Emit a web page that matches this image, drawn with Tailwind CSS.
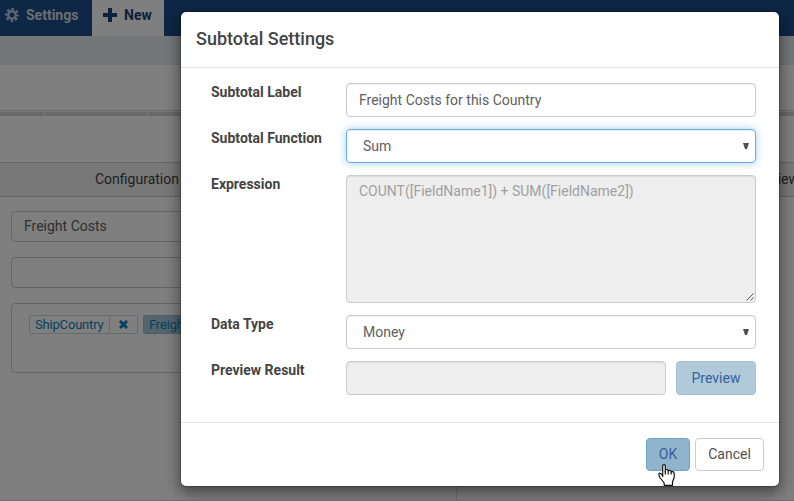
<!DOCTYPE html>
<html lang="en">
<head>
<meta charset="utf-8">
<title>Subtotal Settings</title>
<script src="https://cdn.jsdelivr.net/npm/@tailwindcss/browser@4"></script>
</head>
<body class="relative h-[501px] w-[794px] overflow-hidden bg-white font-['Roboto',sans-serif] text-sm leading-5 text-[#606060]">
<!-- Page behind the dialog -->
<div class="flex h-[501px] flex-col">
  <header class="flex h-9 shrink-0 bg-[#1d4e8c] font-bold">
    <div class="flex w-[92px] items-center pb-[6px] pl-[5px] text-[#d9dcde]">
      <svg class="mr-[7px] h-[14px] w-[14px]" viewBox="0 0 14 14" fill="none" stroke="#b9d0dc"><circle cx="7" cy="7" r="3.7" stroke-width="2.4"/><circle cx="7" cy="7" r="5.9" stroke-width="2.2" stroke-dasharray="2.5 2.134" stroke-dashoffset="1.25"/></svg>
      <span>Settings</span>
    </div>
    <div class="flex w-[72px] items-center bg-white pb-[6px] pl-[11px] text-[#1d4277]">
      <svg class="mr-[7px] h-[14px] w-[14px]" viewBox="0 0 14 14" fill="#1d4277"><path d="M5 0h4v5h5v4H9v5H5V9H0V5h5z"/></svg>
      <span>New</span>
    </div>
  </header>
  <div class="h-[29px] shrink-0 bg-[#e7ebef]"></div>
  <div class="h-[45px] shrink-0"></div>
  <div class="flex h-[6px] shrink-0 gap-px border-t border-[#d4d4d4] bg-[#f4f4f4] pt-px">
    <div class="w-11 bg-[#d2d2d2]"></div><div class="w-[102px] bg-[#d2d2d2]"></div><div class="flex-1 bg-[#d2d2d2]"></div>
  </div>
  <div class="h-[46px] shrink-0"></div>
  <div class="flex h-[35px] shrink-0 items-center justify-between border-y border-[#ccc] bg-[#f0f0f0] pb-px text-[#404040]">
    <span class="pl-[95px]">Configuration</span><span class="-mr-[5px]">Preview</span>
  </div>
  <div class="flex flex-1">
    <div class="flex w-[456px] flex-col border-b border-[#ddd] pl-[11px] pt-[14px]">
      <div class="h-[31px] w-[430px] rounded border border-[#ccc] px-3 py-1">Freight Costs</div>
      <div class="mt-[15px] h-[31px] w-[430px] rounded border border-[#ccc]"></div>
      <div class="mt-[15px] flex h-[70px] w-[430px] gap-[5px] rounded border border-[#ccc] pl-[17px] pt-[11px] text-[13px] leading-[17px] text-[#0b84c4]">
        <div class="flex h-[19px] w-[109px] rounded-[2px] border border-[#c3dbe6]">
          <span class="w-[80px] border-r border-[#c3dbe6] pl-[5px] tracking-[-0.18px]">ShipCountry</span>
          <svg class="ml-[9px] mt-1 h-[9px] w-[9px]" viewBox="0 0 9 9" stroke="#0b84c4" stroke-width="3"><path d="M1 1l7 7M8 1L1 8"/></svg>
        </div>
        <div class="h-[19px] w-20 rounded-[2px] border border-[#9cbccd] bg-[#a8cbdc] pl-[5px] tracking-[-0.18px]">Freight</div>
      </div>
    </div>
    <div class="flex-1 border-b border-l border-[#ddd]"></div>
  </div>
</div>
<div class="absolute inset-0 bg-black/50"></div>

<!-- Dialog -->
<section class="absolute left-[180px] top-[11px] flex h-[476px] w-[600px] flex-col rounded-[6px] border border-black/20 bg-white bg-clip-padding shadow-[0_5px_15px_rgba(0,0,0,0.5)]">
  <h1 class="h-14 border-b border-[#e5e5e5] px-[15px] pt-[15px] text-lg font-medium leading-6 text-[#444]">Subtotal Settings</h1>
  <div class="grid flex-1 grid-cols-[135px_410px] content-start gap-y-3 pl-[30px] pt-[15px] font-bold text-[#444]">
    <label class="-mt-px">Subtotal Label</label>
    <div class="h-[34px] rounded border border-[#ccc] px-3 py-[6px] font-normal text-[#606060] shadow-[inset_0_1px_1px_rgba(0,0,0,0.075)]">Freight Costs for this Country</div>
    <label class="-mt-px">Subtotal Function</label>
    <div class="flex h-[34px] items-center justify-between rounded border border-[#66afe9] pl-4 pr-[6px] font-normal text-[#606060] shadow-[inset_0_1px_1px_rgba(0,0,0,0.075),0_0_8px_rgba(102,175,233,0.6)]">Sum<svg class="h-[6px] w-[6px]" viewBox="0 0 6 6" fill="#505050"><path d="M0 0h6L4 6H2z"/></svg></div>
    <label class="-mt-px">Expression</label>
    <div class="flex h-[128px] justify-between rounded border border-[#ccc] bg-[#eee] pl-3 pr-px pt-[5px] font-normal text-[#a0a0a0] shadow-[inset_0_1px_1px_rgba(0,0,0,0.075)]">COUNT([FieldName1]) + SUM([FieldName2])<svg class="mb-px h-2 w-2 self-end" viewBox="0 0 8 8" stroke="#555"><path d="M0.5 7.5l7-7M4.5 7.5l3-3"/></svg></div>
    <label class="-mt-px">Data Type</label>
    <div class="flex h-[34px] items-center justify-between rounded border border-[#ccc] pl-4 pr-[6px] font-normal text-[#606060] shadow-[inset_0_1px_1px_rgba(0,0,0,0.075)]">Money<svg class="h-[6px] w-[6px]" viewBox="0 0 6 6" fill="#505050"><path d="M0 0h6L4 6H2z"/></svg></div>
    <label class="-mt-px">Preview Result</label>
    <div class="flex gap-[10px] font-normal">
      <div class="h-[34px] w-[320px] rounded border border-[#ccc] bg-[#eee] shadow-[inset_0_1px_1px_rgba(0,0,0,0.075)]"></div>
      <button class="h-[34px] w-20 rounded border border-[#a0c2d5] bg-[#b1cada] text-[#35609c]">Preview</button>
    </div>
  </div>
  <footer class="flex h-16 justify-end gap-[5px] border-t border-[#e5e5e5] px-[15px] pt-[15px]">
    <button class="h-[33px] w-11 rounded border border-[#6fa3c0] bg-[#91b4cd] pb-px text-[#35609c]">OK</button>
    <button class="h-[33px] w-[69px] rounded border border-[#ccc] bg-white pb-px text-[#505050]">Cancel</button>
  </footer>
</section>

<!-- Hand pointer -->
<svg class="absolute left-[658px] top-[464px] h-[22px] w-[17px]" viewBox="0 0 17 22" fill="#fff" stroke="#111" stroke-width="1.2" stroke-linejoin="round"><path d="M4.7 13V2Q4.7.7 6 .7T7.3 2V7.2Q7.3 5.5 8.7 5.5T10.2 7Q10.5 6.1 11.8 6.3T13.1 8Q13.6 7.4 14.8 7.7T16.2 9.5V13.5L14.5 17.8V21.3H6.2V19L2.3 14Q.4 10.7.9 9.7T3 9.7L4.7 12"/><path d="M7.3 7v3.5M10.2 7v3.5M13.1 8v2.5" fill="none"/></svg>
</body>
</html>
